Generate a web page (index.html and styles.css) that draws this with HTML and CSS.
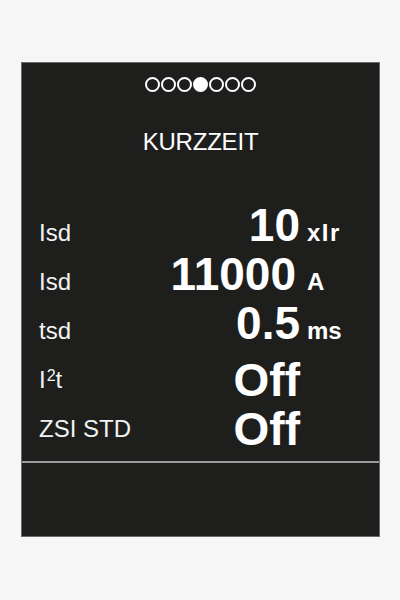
FILE: index.html
```html
<!DOCTYPE html>
<html lang="de">
<head>
    <meta charset="UTF-8">
    <meta name="viewport" content="width=device-width, initial-scale=1.0">
    <title>Kurzzeit</title>
    <link rel="stylesheet" href="styles.css">
</head>
<body>
    <div class="page">
        <div class="screen">
            <div class="dots">
                <span class="dot"></span>
                <span class="dot"></span>
                <span class="dot"></span>
                <span class="dot active"></span>
                <span class="dot"></span>
                <span class="dot"></span>
                <span class="dot"></span>
            </div>

            <div class="title">KURZZEIT</div>

            <div class="rows">
                <div class="row">
                    <span class="label">Isd</span>
                    <div class="val"><span class="num">10</span><span class="unit unit-wide">xIr</span></div>
                </div>
                <div class="row">
                    <span class="label">Isd</span>
                    <div class="val"><span class="num num-long">11000</span><span class="unit">A</span></div>
                </div>
                <div class="row">
                    <span class="label">tsd</span>
                    <div class="val"><span class="num">0.5</span><span class="unit">ms</span></div>
                </div>
                <div class="row">
                    <span class="label">I<sup>2</sup>t</span>
                    <div class="val"><span class="num off">Off</span><span class="unit"></span></div>
                </div>
                <div class="row">
                    <span class="label">ZSI STD</span>
                    <div class="val"><span class="num off">Off</span><span class="unit"></span></div>
                </div>
            </div>

            <div class="divider"></div>
        </div>
    </div>
</body>
</html>
```

FILE: styles.css
```css
* {
    margin: 0;
    padding: 0;
    box-sizing: border-box;
}

body {
    font-family: 'Liberation Sans', Arial, sans-serif;
    background: #f6f6f6;
    color: #ffffff;
}

.page {
    padding: 62px 0 0 21px;
    height: 600px;
}

.screen {
    width: 359px;
    height: 475px;
    background: #1e1f1d;
    border: 1px solid #6a6a6a;
    display: flex;
    flex-direction: column;
}

/* page indicator */
.dots {
    margin-top: 14px;
    display: flex;
    justify-content: center;
    gap: 1px;
}

.dot {
    width: 15px;
    height: 15px;
    border: 2px solid #ffffff;
    border-radius: 50%;
}

.dot.active {
    background: #ffffff;
}

.title {
    margin-top: 36px;
    font-size: 24px;
    line-height: 28px;
    text-align: center;
    letter-spacing: -0.2px;
}

.rows {
    margin-top: 45px;
}

.row {
    height: 49px;
    display: flex;
    align-items: baseline;
    padding-left: 17px;
    line-height: 49px;
}

.label {
    font-size: 24px;
    color: #f2f2f2;
}

.label sup {
    font-size: 16px;
    vertical-align: 7px;
    line-height: 0;
    margin-left: 1px;
}

.val {
    margin-left: auto;
    font-size: 46px;
    font-weight: 700;
    white-space: nowrap;
}

.num {
    display: inline-block;
    width: 160px;
    text-align: right;
}

.num-long {
    padding-right: 4px;
}

.num.off {
    vertical-align: -8px;
}

.unit {
    display: inline-block;
    width: 72px;
    margin-left: 7px;
    font-size: 24px;
}

.unit-wide {
    letter-spacing: 1.5px;
}

.divider {
    margin-top: 15px;
    height: 2px;
    background: #9a9a9a;
}
```
